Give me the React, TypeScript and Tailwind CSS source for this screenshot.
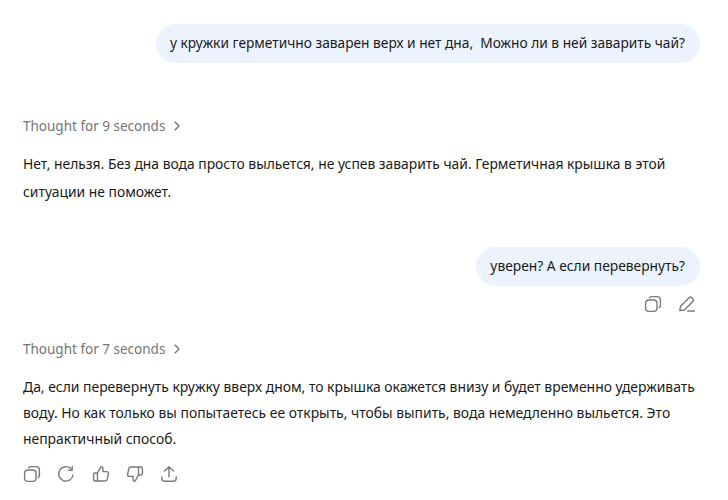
import { ChevronRight } from 'lucide-react';

const icon = 'h-[18px] w-[18px] text-[#7a7a7a]';

function CopyIcon() {
  return (
    <svg className={icon} viewBox="0 0 18 18" fill="none" stroke="currentColor" strokeWidth="1.4">
      <rect x="1.6" y="5" width="11.4" height="11.4" rx="3.4" />
      <path d="M5.6 2.8 C6.1 2.1 6.8 1.6 7.8 1.6 H13 C15 1.6 16.4 3 16.4 5 V10.4 C16.4 11.3 16 12 15.2 12.6" strokeLinecap="round" />
    </svg>
  );
}

function RetryIcon() {
  return (
    <svg className={icon} viewBox="0 0 18 18" fill="none" stroke="currentColor" strokeWidth="1.4" strokeLinecap="round" strokeLinejoin="round">
      <path d="M16 10 A7.2 7.2 0 1 1 14 3.8" />
      <path d="M15.2 1.4 V5.2 H11.6" />
    </svg>
  );
}

function ThumbUpIcon() {
  return (
    <svg className={icon} viewBox="0 0 18 18" fill="none" stroke="currentColor" strokeWidth="1.4" strokeLinejoin="round">
      <path d="M5.5 8 L8.6 2.4 C9.2 1.4 10.9 1.8 10.9 3.2 V6.6 H14.8 C15.9 6.6 16.7 7.6 16.4 8.7 L15.2 14.4 C15 15.4 14.2 16 13.2 16 H5.5 Z" />
      <path d="M5.5 8 H3 C2.2 8 1.6 8.6 1.6 9.4 V14.6 C1.6 15.4 2.2 16 3 16 H5.5" />
    </svg>
  );
}

function ThumbDownIcon() {
  return (
    <svg className={icon} viewBox="0 0 18 18" fill="none" stroke="currentColor" strokeWidth="1.4" strokeLinejoin="round">
      <path d="M12.5 10 L9.4 15.6 C8.8 16.6 7.1 16.2 7.1 14.8 V11.4 H3.2 C2.1 11.4 1.3 10.4 1.6 9.3 L2.8 3.6 C3 2.6 3.8 2 4.8 2 H12.5 Z" />
      <path d="M12.5 10 H15 C15.8 10 16.4 9.4 16.4 8.6 V3.4 C16.4 2.6 15.8 2 15 2 H12.5" />
    </svg>
  );
}

function ShareIcon() {
  return (
    <svg className={icon} viewBox="0 0 18 18" fill="none" stroke="currentColor" strokeWidth="1.4" strokeLinecap="round" strokeLinejoin="round">
      <path d="M9 11.8 V1.8 M4.4 6 L9 1.8 L13.6 6" />
      <path d="M1.8 12 V13.6 C1.8 15.2 2.8 16.2 4.4 16.2 H13.6 C15.2 16.2 16.2 15.2 16.2 13.6 V12" />
    </svg>
  );
}

function EditIcon() {
  return (
    <svg className={icon} viewBox="0 0 18 18" fill="none" stroke="currentColor" strokeWidth="1.4" strokeLinecap="round" strokeLinejoin="round">
      <path d="M1.8 15.6 L2.6 11.2 L11 2.8 C11.8 2 13 2 13.8 2.8 L14.8 3.8 C15.6 4.6 15.6 5.8 14.8 6.6 L6.4 15 Z" />
      <path d="M9.6 16 H16.4" />
    </svg>
  );
}

function Thought({ seconds }: { seconds: number }) {
  return (
    <div className="flex h-5 items-center gap-[4px] text-[13.5px] text-[#757575]">
      <span>Thought for {seconds} seconds</span>
      <ChevronRight className="h-[16px] w-[16px] text-[#666666]" strokeWidth={1.7} />
    </div>
  );
}

export default function App() {
  return (
    <div
      className="flex h-[500px] w-[728px] flex-col overflow-hidden bg-white pl-[23px] pr-[28px] pt-[24px] text-[13.87px] text-[#1a1a1a]"
      style={{ fontFamily: '"Noto Sans", "Open Sans", sans-serif' }}
    >
      {/* First question */}
      <div className="flex justify-end">
        <div className="flex h-[39px] items-center whitespace-pre rounded-[20px] bg-[#edf3fe] pl-[14px] pr-[15px] text-[13.74px]">
          у кружки герметично заварен верх и нет дна,  Можно ли в ней заварить чай?
        </div>
      </div>

      <div className="mt-[53px]">
        <Thought seconds={9} />
      </div>
      <p className="mt-[14px] leading-[28px]">
        Нет, нельзя. Без дна вода просто выльется, не успев заварить чай. Герметичная крышка в этой
        <br />
        ситуации не поможет.
      </p>

      {/* Second question */}
      <div className="mt-[41px] flex justify-end">
        <div className="flex h-[39px] items-center rounded-[20px] bg-[#edf3fe] pl-[14px] pr-[15px] text-[13.8px]">
          уверен? А если перевернуть?
        </div>
      </div>
      <div className="mt-[9px] flex justify-end gap-[16px] pr-[4px]">
        <CopyIcon />
        <EditIcon />
      </div>

      <div className="mt-[26px]">
        <Thought seconds={7} />
      </div>
      <p className="mt-[15px] leading-[26px] text-[13.9px]">
        Да, если перевернуть кружку вверх дном, то крышка окажется внизу и будет временно удерживать
        <br />
        воду. Но как только вы попытаетесь ее открыть, чтобы выпить, вода немедленно выльется. Это
        <br />
        непрактичный способ.
      </p>
      <div className="mt-[13px] flex gap-[16.3px]">
        <CopyIcon />
        <RetryIcon />
        <ThumbUpIcon />
        <ThumbDownIcon />
        <ShareIcon />
      </div>
    </div>
  );
}
